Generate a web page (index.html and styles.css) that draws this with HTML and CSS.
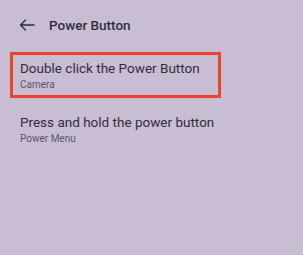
FILE: index.html
```html
<!DOCTYPE html>
<html lang="en">
<head>
    <meta charset="UTF-8">
    <meta name="viewport" content="width=device-width, initial-scale=1.0">
    <title>Power Button</title>
    <link rel="stylesheet" href="styles.css">
</head>
<body>

    <div class="screen">
        <div class="top-bar">
            <svg class="back-icon" xmlns="http://www.w3.org/2000/svg" width="16" height="12" viewBox="0 0 16 12">
                <path d="M15 6H1.5M6.5 1L1.5 6l5 5" fill="none" stroke="#2e2b36" stroke-width="1.3" stroke-linecap="round" stroke-linejoin="round"></path>
            </svg>
            <span class="top-title">Power Button</span>
        </div>

        <div class="option-list">
            <div class="option highlight">
                <div class="option-title">Double click the Power Button</div>
                <div class="option-sub">Camera</div>
            </div>
            <div class="option">
                <div class="option-title">Press and hold the power button</div>
                <div class="option-sub">Power Menu</div>
            </div>
        </div>
    </div>

</body>
</html>
```

FILE: styles.css
```css
body {
    margin: 0;
    font-family: Roboto, "Noto Sans", sans-serif;
    background-color: #c9bdd4;
    color: #312d3a;
}

.screen {
    height: 255px;
    box-sizing: border-box;
}

.top-bar {
    display: flex;
    align-items: center;
    gap: 14px;
    height: 50px;
    padding-left: 19px;
}

.top-title {
    font-size: 13.5px;
    font-weight: 500;
}

.option-list {
    padding: 2px 0 0 10px;
    display: flex;
    flex-direction: column;
    align-items: flex-start;
    gap: 8px;
}

.option {
    padding: 3px 7px;
    border: 3px solid transparent;
    white-space: nowrap;
}

.option.highlight {
    width: 191px;
    border-color: #e8452c;
}

.option-title {
    font-size: 13.5px;
    line-height: 20px;
}

.option-sub {
    font-size: 10px;
    line-height: 14px;
    color: #5b5667;
}
```
